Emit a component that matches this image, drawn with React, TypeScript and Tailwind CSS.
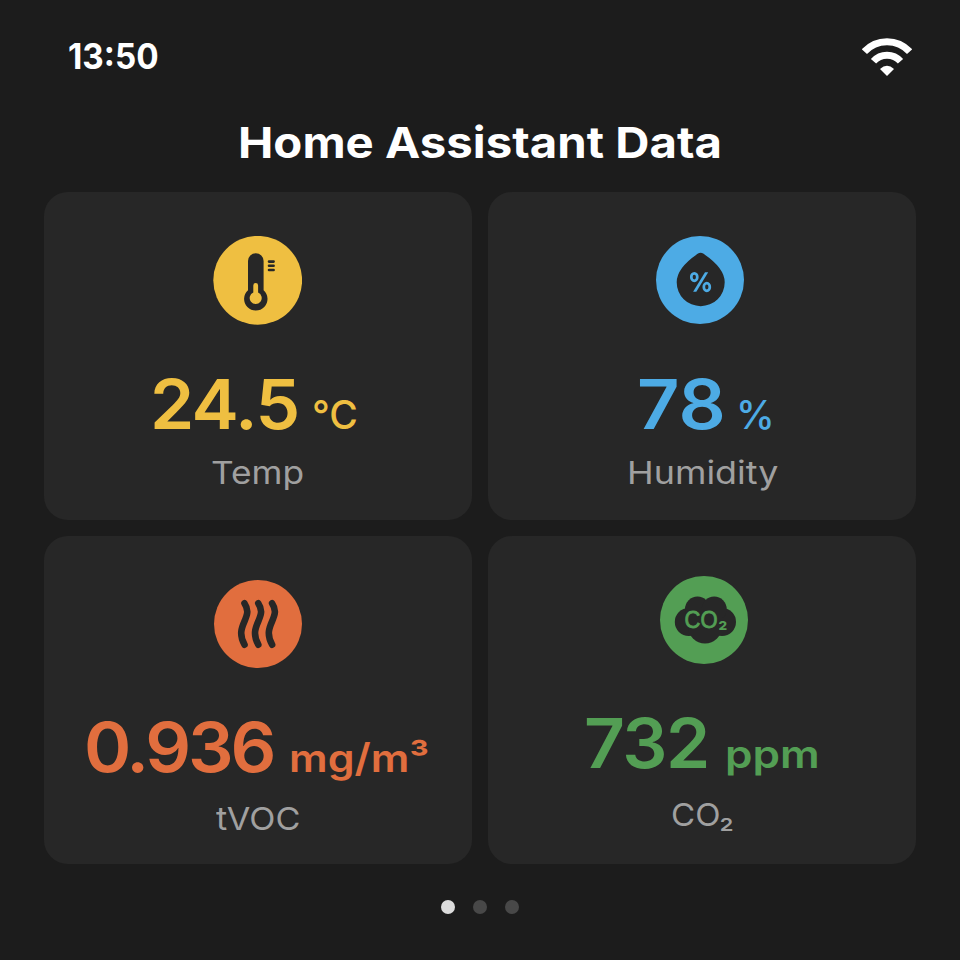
import type { ReactNode } from "react";

function Wifi() {
  return (
    <svg width="50" height="38" viewBox="862 38 50 38" fill="none">
      <path d="M864.4 51.6A30.6 30.6 0 0 1 909.6 51.6" stroke="#fff" strokeWidth="7" />
      <path d="M873.5 61.3A18 18 0 0 1 900.5 61.3" stroke="#fff" strokeWidth="7" />
      <path d="M887 76L880 69Q887 62.5 894 69Z" fill="#fff" />
    </svg>
  );
}

function Thermometer() {
  return (
    <svg width="89" height="89" viewBox="213 236 89 89">
      <circle cx="257.7" cy="280.3" r="44.4" fill="#efbf41" />
      <path d="M248 261a7.8 7.8 0 0 1 15.6 0V290.2a11.7 11.7 0 1 1-15.6 0Z" fill="#272727" />
      <path d="M253.3 285.5a2.4 2.4 0 0 1 4.8 0V292.6a6 6 0 1 1-4.8 0Z" fill="#efbf41" />
      <path d="M269 261.6h4.6M269 265.8h4.6M269 270h4.6" stroke="#272727" strokeWidth="2.6" strokeLinecap="round" />
    </svg>
  );
}

function Drop() {
  return (
    <svg width="88" height="88" viewBox="656 236 88 88">
      <circle cx="700" cy="280" r="44" fill="#4dabe5" />
      <path d="M698 253.6Q700.6 252 703.2 253.6Q724.7 268 724.7 282.2A24 24 0 0 1 676.7 282.2Q676.7 268 698 253.6Z" fill="#272727" />
      <ellipse cx="694.3" cy="277.1" rx="3" ry="3.8" fill="none" stroke="#4dabe5" strokeWidth="2.7" />
      <ellipse cx="706.8" cy="287" rx="3" ry="3.8" fill="none" stroke="#4dabe5" strokeWidth="2.7" />
      <path d="M705 272.3h3.2L696.3 291.7h-3.2Z" fill="#4dabe5" />
    </svg>
  );
}

function Waves() {
  return (
    <svg width="88" height="88" viewBox="214 580 88 88" fill="none">
      <circle cx="258" cy="624" r="44" fill="#e16e3e" />
      <path
        d="M244.5 603.3C254.5 618 233.5 625 244.5 644.7M258.3 603.3C268.3 618 247.3 625 258.3 644.7M272.1 603.3C282.1 618 261.1 625 272.1 644.7"
        stroke="#272727"
        strokeWidth="6.6"
        strokeLinecap="round"
      />
    </svg>
  );
}

function Cloud() {
  return (
    <svg width="88" height="88" viewBox="660 576 88 88">
      <circle cx="704" cy="620" r="44" fill="#539e54" />
      <g fill="#272727">
        <circle cx="688.8" cy="622" r="14" />
        <circle cx="722" cy="622" r="14" />
        <circle cx="697.5" cy="609" r="12.5" />
        <circle cx="714.2" cy="609" r="12.5" />
        <circle cx="705" cy="626.5" r="17" />
        <rect x="690" y="609" width="32" height="25" />
      </g>
      <text x="684.6" y="628.3" fontSize="23.5" fontFamily="'Liberation Sans', sans-serif" fill="#539e54" stroke="#539e54" strokeWidth="0.8" textLength="33" lengthAdjust="spacingAndGlyphs">CO</text>
      <text x="718.6" y="630" fontSize="12" fontWeight="800" fontFamily="Inter, sans-serif" fill="#539e54" textLength="8.6" lengthAdjust="spacingAndGlyphs">2</text>
    </svg>
  );
}

interface TileProps {
  icon: ReactNode;
  value: string;
  unit: string;
  label: string;
  color: string;
  shift: string;
  valueStyle: string;
  unitStyle: string;
  labelStyle: string;
}

function Tile({ icon, value, unit, label, color, shift, valueStyle, unitStyle, labelStyle }: TileProps) {
  return (
    <section className={`flex h-[328px] flex-col items-start rounded-[24px] bg-[#272727] ${shift}`}>
      {icon}
      <div className={`flex h-[72px] items-baseline leading-[72px] whitespace-nowrap ${color}`}>
        <span className={`origin-left text-[69px] font-semibold ${valueStyle}`}>{value}</span>
        <span className={`origin-left text-[39px] ${unitStyle}`}>{unit}</span>
      </div>
      <div className={`origin-left text-[31.5px] leading-[36px] whitespace-nowrap text-[#a0a0a0] ${labelStyle}`}>{label}</div>
    </section>
  );
}

export default function App() {
  return (
    <main className="flex h-[960px] w-[960px] flex-col overflow-hidden bg-[#1c1c1c] font-['Inter',sans-serif]">
      <header className="flex h-[113px] items-start justify-between pt-[38px] pr-[48px] pl-[68px]">
        <span className="origin-left scale-x-[0.95] text-[35px] leading-[36px] font-bold text-white">13:50</span>
        <Wifi />
      </header>
      <h1 className="h-[79px] pl-[238px] text-[43px] leading-[58px] font-bold whitespace-nowrap text-white">
        <span className="inline-block origin-left scale-x-[1.101]">Home Assistant Data</span>
      </h1>
      <div className="grid grid-cols-2 gap-4 px-[44px]">
        <Tile
          icon={<div className="mb-[43px] ml-[169px]"><Thermometer /></div>}
          value="24.5" unit="°C" label="Temp" color="text-[#efbf41]" shift="pt-[44px]"
          valueStyle="ml-[106px] w-[162px] scale-x-[1.03] tracking-[-1.5px]" unitStyle="font-medium" labelStyle="ml-[167px] mt-[15px] scale-x-[1.12]"
        />
        <Tile
          icon={<div className="mb-[44px] ml-[168px]"><Drop /></div>}
          value="78" unit="%" label="Humidity" color="text-[#4dabe5]" shift="pt-[44px]"
          valueStyle="ml-[149px] w-[99px] scale-x-[1.07]" unitStyle="font-medium" labelStyle="ml-[139px] mt-[15px] scale-x-[1.14]"
        />
        <Tile
          icon={<div className="mb-[43px] ml-[170px]"><Waves /></div>}
          value="0.936" unit="mg/m³" label="tVOC" color="text-[#e16e3e]" shift="pt-[44px]"
          valueStyle="ml-[40px] w-[205px] scale-x-[1.04] tracking-[-3px]" unitStyle="scale-x-[1.1] font-semibold" labelStyle="ml-[172px] mt-[18px] scale-x-[1.085]"
        />
        <Tile
          icon={<div className="mb-[43px] ml-[172px]"><Cloud /></div>}
          value="732" unit="ppm" label="CO₂" color="text-[#539e54]" shift="pt-[40px]"
          valueStyle="ml-[96px] w-[141px] scale-x-[1.03] tracking-[-1.5px]" unitStyle="scale-x-[1.13] font-semibold" labelStyle="ml-[183px] mt-[18px] scale-x-[1.05]"
        />
      </div>
      <nav className="mt-[36px] flex justify-center gap-[18px]">
        <span className="h-[14px] w-[14px] rounded-full bg-[#dcdcdc]" />
        <span className="h-[14px] w-[14px] rounded-full bg-[#484848]" />
        <span className="h-[14px] w-[14px] rounded-full bg-[#484848]" />
      </nav>
    </main>
  );
}
